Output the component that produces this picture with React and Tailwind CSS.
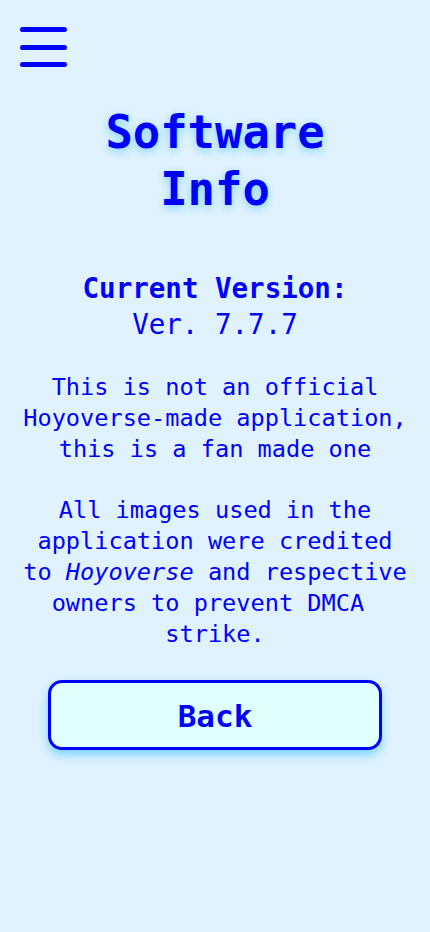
export default function App() {
  const mono = "font-['DejaVu_Sans_Mono','Liberation_Mono',monospace]";
  return (
    <div className={`min-h-screen bg-[#e0f2fe] text-[#0000ff] ${mono}`}>
      <header className="pt-[27px] pl-[20px]">
        <button className="flex flex-col gap-[12.5px]" aria-label="Menu">
          <span className="block w-[47px] h-[5px] rounded-full bg-[#0000ff]" />
          <span className="block w-[47px] h-[5px] rounded-full bg-[#0000ff]" />
          <span className="block w-[47px] h-[5px] rounded-full bg-[#0000ff]" />
        </button>
      </header>

      <main className="px-[19px] flex flex-col items-center text-center">
        <h1 className="mt-[37px] w-[300px] text-[45.5px] leading-[57px] font-bold [text-shadow:0_3px_8px_#7dd3fc]">
          Software Info
        </h1>

        <section className="mt-[52px]">
          <h2 className="text-[27.5px] leading-[36px] font-bold">Current Version:</h2>
          <p className="text-[27.5px] leading-[36px]">Ver. 7.7.7</p>
        </section>

        <p className="mt-[30px] text-[23.6px] leading-[31px]">
          This is not an official Hoyoverse-made application, this is a fan made one
        </p>

        <p className="mt-[30px] text-[23.6px] leading-[31px]">
          All images used in the application were credited to <i>Hoyoverse</i> and respective owners to prevent DMCA{'\u00a0'} strike.
        </p>

        <button className="mt-[30px] w-[334px] h-[70px] pt-[3px] rounded-[14px] border-[3px] border-[#0000ff] bg-[#e0ffff] text-[31px] font-bold shadow-[0_5px_10px_#7dd3fc]">
          Back
        </button>
      </main>
    </div>
  );
}
